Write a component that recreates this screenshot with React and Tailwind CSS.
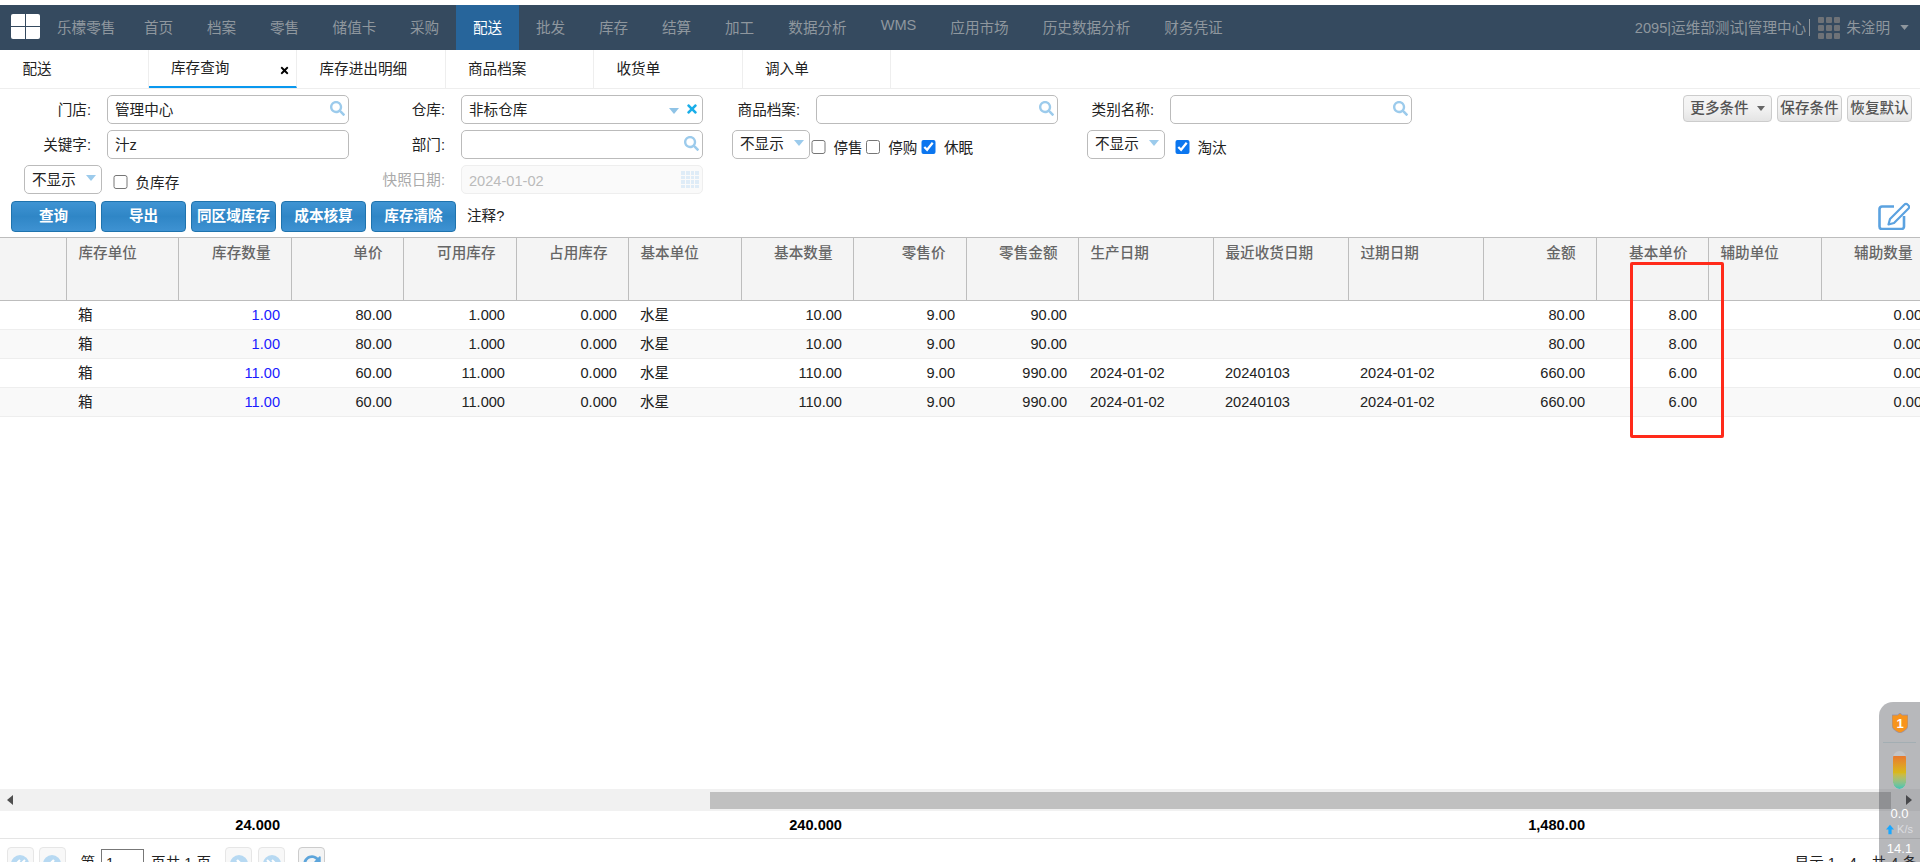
import { FaSearch, FaTimes, FaSyncAlt } from "react-icons/fa";

const NAV = [
  { label: "首页", w: "w-[63px]" },
  { label: "档案", w: "w-[63px]" },
  { label: "零售", w: "w-[63px]" },
  { label: "储值卡", w: "w-[77px]" },
  { label: "采购", w: "w-[63px]" },
  { label: "配送", w: "w-[63px]", active: true },
  { label: "批发", w: "w-[63px]" },
  { label: "库存", w: "w-[63px]" },
  { label: "结算", w: "w-[63px]" },
  { label: "加工", w: "w-[63px]" },
  { label: "数据分析", w: "w-[93px]" },
  { label: "WMS", w: "w-[69px]", latin: true },
  { label: "应用市场", w: "w-[93px]" },
  { label: "历史数据分析", w: "w-[121px]" },
  { label: "财务凭证", w: "w-[93px]" },
];

const TABS = ["配送", "库存查询", "库存进出明细", "商品档案", "收货单", "调入单"];

const COLUMNS = [
  { key: "blank", title: "", w: "w-[66px]", left: true },
  { key: "unit", title: "库存单位", w: "w-[112px]", left: true },
  { key: "qty", title: "库存数量", w: "w-[113px]", blue: true },
  { key: "price", title: "单价", w: "w-[112px]" },
  { key: "avail", title: "可用库存", w: "w-[113px]" },
  { key: "used", title: "占用库存", w: "w-[112px]" },
  { key: "baseUnit", title: "基本单位", w: "w-[113px]", left: true },
  { key: "baseQty", title: "基本数量", w: "w-[112px]" },
  { key: "retail", title: "零售价", w: "w-[113px]" },
  { key: "retailAmt", title: "零售金额", w: "w-[112px]" },
  { key: "made", title: "生产日期", w: "w-[135px]", left: true },
  { key: "received", title: "最近收货日期", w: "w-[135px]", left: true },
  { key: "expire", title: "过期日期", w: "w-[135px]", left: true },
  { key: "amount", title: "金额", w: "w-[113px]" },
  { key: "basePrice", title: "基本单价", w: "w-[112px]" },
  { key: "auxUnit", title: "辅助单位", w: "w-[113px]", left: true },
  { key: "auxQty", title: "辅助数量", w: "w-[112px]" },
];

const rowA = {
  unit: "箱", qty: "1.00", price: "80.00", avail: "1.000", used: "0.000", baseUnit: "水星",
  baseQty: "10.00", retail: "9.00", retailAmt: "90.00", amount: "80.00", basePrice: "8.00", auxQty: "0.00",
};
const rowB = {
  unit: "箱", qty: "11.00", price: "60.00", avail: "11.000", used: "0.000", baseUnit: "水星",
  baseQty: "110.00", retail: "9.00", retailAmt: "990.00", made: "2024-01-02", received: "20240103",
  expire: "2024-01-02", amount: "660.00", basePrice: "6.00", auxQty: "0.00",
};
const ROWS = [rowA, rowA, rowB, rowB];

function Caret({ className }) {
  return (
    <svg viewBox="0 0 10 6" className={className} fill="currentColor">
      <path d="M0 0h10L5 6z" />
    </svg>
  );
}

function Label({ w, children, muted }) {
  return (
    <div className={`${w} shrink-0 pr-[16px] pt-[5px] text-right ${muted ? "text-[#aaa]" : "text-[#222]"}`}>
      {children}
    </div>
  );
}

function TextBox({ value, children, disabled }) {
  return (
    <div
      className={`relative flex h-[28.6px] w-[242px] shrink-0 items-center rounded-[5px] border pl-[7px] ${
        disabled ? "border-[#eee] bg-[#fafafa] text-[#bbb]" : "border-[#bbb] bg-white text-[#222]"
      }`}
    >
      <span className="pt-[2px]">{value}</span>
      {children}
    </div>
  );
}

function SearchIcon() {
  return <FaSearch className="absolute right-[3px] top-[5px] text-[15px] text-[#9ccbec]" />;
}

function HideSelect({ className }) {
  return (
    <div
      className={`flex h-[28.6px] w-[78px] shrink-0 items-center justify-between rounded-[5px] border border-[#bbb] bg-white pl-[7px] pr-[5px] text-[#222] ${className}`}
    >
      <span>不显示</span>
      <Caret className="mb-[3px] h-[6px] w-[10px] text-[#9ccbec]" />
    </div>
  );
}

function Check({ checked, label, className }) {
  return (
    <label className={`flex items-center ${className}`}>
      <input type="checkbox" checked={checked} readOnly className="mt-[5px] h-[14.5px] w-[14.5px] accent-[#0b76ef]" />
      <span className="ml-[8px] pt-[7px] text-[#222]">{label}</span>
    </label>
  );
}

function BlueButton({ children }) {
  return (
    <button className="h-[31px] w-[85px] rounded-[4px] border border-[#1f73ad] bg-gradient-to-b from-[#3f94d3] via-[#2f86c6] to-[#3e92d2] text-[14.6px] font-bold text-white">
      {children}
    </button>
  );
}

function GrayButton({ className, children }) {
  return (
    <button
      className={`flex h-[26.5px] items-center justify-center rounded-[4px] border border-[#ccc] bg-gradient-to-b from-[#f6f6f6] via-[#f2f2f2] to-[#e4e4e4] font-medium text-[#555] ${className}`}
    >
      {children}
    </button>
  );
}

function PageButton({ double, right }) {
  const points = right ? "7,5 11,9 7,13" : "11,5 7,9 11,13";
  return (
    <div className="flex h-[30px] w-[27px] shrink-0 justify-center rounded-[4px] border border-[#e6e6e6] bg-[#f8f8f8] pt-[7px]">
      <svg viewBox="0 0 18 18" className="h-[18px] w-[18px]">
        <circle cx="9" cy="9" r="9" fill="#b7d9f2" />
        {double ? (
          <>
            <polyline
              points={right ? "4,5 8,9 4,13" : "9,5 5,9 9,13"}
              fill="none"
              stroke="#fff"
              strokeWidth="2"
            />
            <polyline
              points={right ? "9,5 13,9 9,13" : "14,5 10,9 14,13"}
              fill="none"
              stroke="#fff"
              strokeWidth="2"
            />
          </>
        ) : (
          <polyline points={points} fill="none" stroke="#fff" strokeWidth="2.4" />
        )}
      </svg>
    </div>
  );
}

function EditIcon() {
  return (
    <svg viewBox="0 0 32 28" className="ml-auto mr-[10px] h-[28px] w-[32px] text-[#5ba2e0]" fill="none" stroke="currentColor">
      <path d="M16 4.500H4a2.500 2.500 0 0 0-2.500 2.500v17.500A2.500 2.500 0 0 0 4 27h19.500a2.500 2.500 0 0 0 2.500-2.500V14" strokeWidth="2.600" />
      <path d="M26.500 2.500a2 2 0 0 1 3 0l1 1a2 2 0 0 1 0 3L16 21l-5.500 1.500L12 17z" strokeWidth="2.200" strokeLinejoin="round" />
    </svg>
  );
}

export default function App() {
  return (
    <div className="relative flex h-[862px] w-full flex-col overflow-hidden bg-white pt-[5px] font-['Liberation_Sans','Noto_Sans_CJK_SC',sans-serif] text-[14.6px] leading-[20px]">
      {/* top nav */}
      <div className="flex h-[45px] shrink-0 items-stretch bg-[#354a5f] text-[#8f979e]">
        <div className="ml-[11px] mt-[9px] grid h-[25px] w-[29px] grid-cols-2 gap-[1.5px]">
          <div className="rounded-tl-[2px] bg-white" />
          <div className="rounded-tr-[2px] bg-white" />
          <div className="rounded-bl-[2px] bg-white" />
          <div className="rounded-br-[2px] bg-white" />
        </div>
        <div className="ml-[17px] flex w-[70px] items-center">乐檬零售</div>
        {NAV.map((item) => (
          <div
            key={item.label}
            className={`flex items-center justify-center ${item.w} ${item.active ? "bg-[#27659b] text-white" : ""} ${
              item.latin ? "pb-[5px]" : ""
            }`}
          >
            {item.label}
          </div>
        ))}
        <div className="ml-auto flex items-center pr-[11px]">
          <span>2095|运维部测试|管理中心</span>
          <span className="ml-[3px] h-[17px] w-px bg-[#8f979e]" />
          <div className="ml-[8px] grid w-[22px] grid-cols-3 gap-[2px] opacity-80">
            {[1, 2, 3, 4, 5, 6, 7, 8, 9].map((n) => (
              <div key={n} className="h-[6px] rounded-[1px] bg-[#7d7d7d]" />
            ))}
          </div>
          <span className="ml-[6px]">朱淦明</span>
          <Caret className="ml-[10px] h-[5px] w-[9px]" />
        </div>
      </div>

      {/* tabs */}
      <div className="flex h-[39px] shrink-0 border-b border-[#eee]">
        {TABS.map((tab, i) => (
          <div
            key={tab}
            className={`relative flex w-[148.5px] items-center border-r border-[#eee] pl-[22.5px] text-[#222] ${
              i === 1 ? "border-b-2 border-b-[#0a98ef]" : ""
            }`}
          >
            {tab}
            {i === 1 && <FaTimes className="absolute right-[6px] top-[15px] text-[11px] text-black" />}
          </div>
        ))}
      </div>

      {/* filters */}
      <div className="flex shrink-0 flex-col gap-[6.6px] pt-[6px]">
        <div className="flex items-start">
          <Label w="w-[107px]">门店:</Label>
          <TextBox value="管理中心">
            <SearchIcon />
          </TextBox>
          <Label w="w-[112px]">仓库:</Label>
          <TextBox value="非标仓库">
            <Caret className="absolute right-[23px] top-[12px] h-[6px] w-[10px] text-[#8fc3e6]" />
            <FaTimes className="absolute right-[3px] top-[6px] text-[14px] text-[#19aee9]" />
          </TextBox>
          <Label w="w-[113px]">商品档案:</Label>
          <TextBox value="">
            <SearchIcon />
          </TextBox>
          <Label w="w-[112px]">类别名称:</Label>
          <TextBox value="">
            <SearchIcon />
          </TextBox>
          <div className="ml-auto flex gap-[5px] pr-[8px]">
            <GrayButton className="w-[89px] gap-[8px]">
              更多条件
              <Caret className="h-[5px] w-[8px] text-[#666]" />
            </GrayButton>
            <GrayButton className="w-[65px]">保存条件</GrayButton>
            <GrayButton className="w-[65px]">恢复默认</GrayButton>
          </div>
        </div>

        <div className="flex items-start">
          <Label w="w-[107px]">关键字:</Label>
          <TextBox value="汁z" />
          <Label w="w-[112px]">部门:</Label>
          <TextBox value="">
            <SearchIcon />
          </TextBox>
          <div className="flex h-[28.6px] w-[384px] shrink-0 items-center pl-[29px]">
            <HideSelect />
            <Check label="停售" className="ml-[1px]" />
            <Check label="停购" className="ml-[3px]" />
            <Check checked label="休眠" className="ml-[4px]" />
          </div>
          <HideSelect />
          <Check checked label="淘汰" className="ml-[10px] h-[28.6px]" />
        </div>

        <div className="flex items-start">
          <div className="flex h-[28.6px] w-[349px] shrink-0 items-center pl-[24px]">
            <HideSelect className="w-[77px]" />
            <Check label="负库存" className="ml-[11px]" />
          </div>
          <Label w="w-[112px]" muted>
            快照日期:
          </Label>
          <TextBox value="2024-01-02" disabled>
            <div className="absolute right-[3px] top-[5px] grid h-[17px] w-[18px] grid-cols-4 gap-px">
              {[1, 2, 3, 4, 5, 6, 7, 8, 9, 10, 11, 12, 13, 14, 15, 16].map((n) => (
                <div key={n} className="bg-[#dfecf7]" />
              ))}
            </div>
          </TextBox>
        </div>

        <div className="flex h-[31px] items-center gap-[5px] pl-[11px]">
          <BlueButton>查询</BlueButton>
          <BlueButton>导出</BlueButton>
          <BlueButton>同区域库存</BlueButton>
          <BlueButton>成本核算</BlueButton>
          <BlueButton>库存清除</BlueButton>
          <span className="ml-[6px] text-[#222]">注释?</span>
          <EditIcon />
        </div>
      </div>

      {/* table */}
      <div className="mt-[5.5px] min-h-0 flex-1 overflow-hidden">
        <table className="w-[1932px] table-fixed border-collapse text-[#222]">
          <colgroup>
            {COLUMNS.map((col) => (
              <col key={col.key} className={col.w} />
            ))}
          </colgroup>
          <thead>
            <tr>
              {COLUMNS.map((col) => (
                <th
                  key={col.key}
                  className={`h-[63px] border-x border-y border-[#bdbdbd] bg-[#f4f4f4] pt-[5px] align-top font-medium text-[#666] first:border-l-0 ${
                    col.left ? "pl-[12px] text-left" : "pr-[20px] text-right"
                  }`}
                >
                  {col.title}
                </th>
              ))}
            </tr>
          </thead>
          <tbody>
            {ROWS.map((row, i) => (
              <tr key={i} className={i % 2 ? "bg-[#f9f9f9]" : "bg-white"}>
                {COLUMNS.map((col) => (
                  <td
                    key={col.key}
                    className={`h-[29px] border-b border-[#eee] ${
                      col.left ? "pl-[12px] text-left" : "pr-[11px] text-right"
                    } ${col.blue ? "text-[#1a1aff]" : ""}`}
                  >
                    {row[col.key]}
                  </td>
                ))}
              </tr>
            ))}
          </tbody>
        </table>
      </div>

      {/* scrollbar */}
      <div className="flex h-[22px] shrink-0 items-center bg-[#f1f1f1]">
        <svg viewBox="0 0 6 10" className="ml-[7px] h-[10px] w-[6px] text-[#505050]" fill="currentColor">
          <path d="M6 0v10L0 5z" />
        </svg>
        <div className="ml-[697px] h-[17px] w-[1181px] bg-[#c0c0c0]" />
        <svg viewBox="0 0 6 10" className="ml-[15px] h-[10px] w-[6px] text-[#505050]" fill="currentColor">
          <path d="M0 0v10L6 5z" />
        </svg>
      </div>

      {/* totals */}
      <div className="flex h-[28px] shrink-0 items-center border-b border-[#e5e5e5] font-bold text-black">
        <div className="w-[280px] text-right">24.000</div>
        <div className="w-[562px] text-right">240.000</div>
        <div className="w-[743px] text-right">1,480.00</div>
      </div>

      {/* pager */}
      <div className="flex h-[23px] shrink-0 items-start justify-between pt-[8px]">
        <div className="flex items-start pl-[6.5px]">
          <PageButton double />
          <div className="ml-[5px]">
            <PageButton />
          </div>
          <span className="ml-[15px] pt-[6px] text-[#222]">第</span>
          <div className="ml-[6px] mt-[2px] h-[30px] w-[43px] border border-[#777] pl-[4px] pt-[3px] text-[#222]">1</div>
          <span className="ml-[7px] pt-[6px] text-[#222]">页共 1 页</span>
          <div className="ml-[14px] flex gap-[6px]">
            <PageButton right />
            <PageButton double right />
          </div>
          <div className="ml-[13px] flex h-[30px] w-[27px] justify-center rounded-[4px] border border-[#ccc] bg-[#f4f4f4] pt-[7px]">
            <FaSyncAlt className="text-[18px] text-[#5da5db]" />
          </div>
        </div>
        <span className="pr-[3px] pt-[6px] text-[#222]">显示 1 - 4，共 4 条</span>
      </div>

      {/* red highlight box */}
      <div className="pointer-events-none absolute left-[1630px] top-[262px] h-[176px] w-[94px] rounded-[2px] border-[3px] border-[#ff2a1a]" />

      {/* floating network widget */}
      <div className="pointer-events-none absolute bottom-0 right-0 flex h-[160px] w-[41px] flex-col items-center overflow-hidden rounded-tl-[14px] bg-[rgba(60,63,70,0.37)] pt-[11px] text-white">
        <svg viewBox="0 0 16 20" className="h-[20px] w-[16px] shrink-0">
          <path d="M8 0l2.400 2H16v10c0 4-4 6.500-8 8-4-1.500-8-4-8-8V2h5.600z" fill="#f7941d" stroke="#8f8fb0" strokeWidth="0.8" />
          <text x="8" y="14.500" textAnchor="middle" fontSize="13" fontWeight="700" fill="#fff">
            1
          </text>
        </svg>
        <div className="mt-[9px] h-px w-[33px] shrink-0 bg-[#a3aeb3]" />
        <div className="mt-[8px] flex h-[38px] w-[13px] shrink-0 flex-col justify-end overflow-hidden rounded-full bg-[#c3c5c8]">
          <div className="h-[33px] rounded-b-full bg-gradient-to-b from-[#e8782e] via-[#d8b81c] to-[#35c4b5]" />
        </div>
        <div className="mt-[17px] shrink-0 text-[13px] leading-[16px]">0.0</div>
        <div className="flex shrink-0 items-center gap-[3px] text-[11px] leading-[14px] text-[#dcdde0]">
          <svg viewBox="0 0 10 12" className="h-[11px] w-[8px]" fill="#1aa7ff">
            <path d="M5 0l5 6H7v6H3V6H0z" />
          </svg>
          K/s
        </div>
        <div className="mt-[5px] shrink-0 text-[13px] leading-[16px]">14.1</div>
      </div>
    </div>
  );
}
